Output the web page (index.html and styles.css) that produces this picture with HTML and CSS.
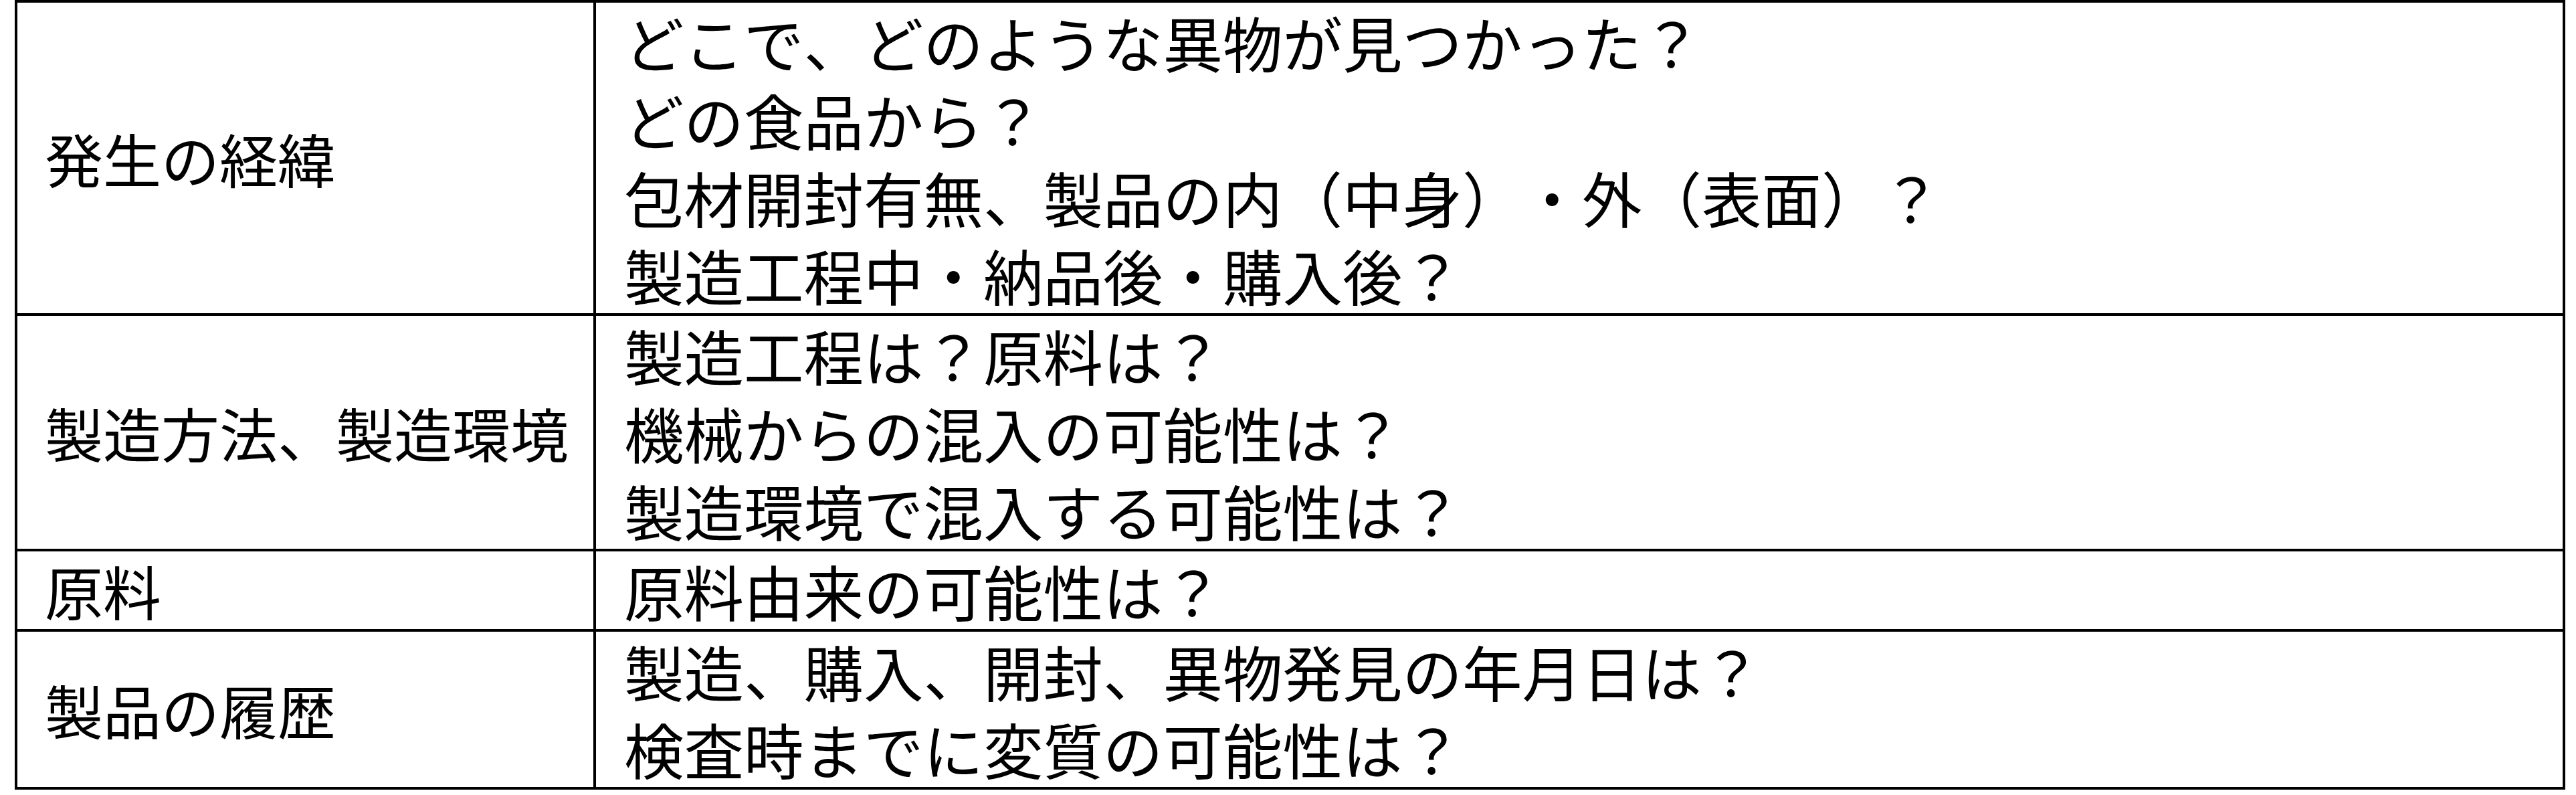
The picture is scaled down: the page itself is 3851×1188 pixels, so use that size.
FILE: index.html
```html
<!DOCTYPE html>
<html lang="ja">
<head>
<meta charset="utf-8">
<title>異物混入の確認事項</title>
<link rel="stylesheet" href="styles.css">
</head>
<body>
<div class="sheet">
  <div class="cell label">発生の経緯</div>
  <div class="cell detail">
    <span class="line">どこで、どのような異物が見つかった？</span>
    <span class="line">どの食品から？</span>
    <span class="line">包材開封有無、製品の内（中身）・外（表面）？</span>
    <span class="line">製造工程中・納品後・購入後？</span>
  </div>

  <div class="cell label">製造方法、製造環境</div>
  <div class="cell detail">
    <span class="line">製造工程は？原料は？</span>
    <span class="line">機械からの混入の可能性は？</span>
    <span class="line">製造環境で混入する可能性は？</span>
  </div>

  <div class="cell label">原料</div>
  <div class="cell detail">
    <span class="line">原料由来の可能性は？</span>
  </div>

  <div class="cell label">製品の履歴</div>
  <div class="cell detail">
    <span class="line">製造、購入、開封、異物発見の年月日は？</span>
    <span class="line">検査時までに変質の可能性は？</span>
  </div>
</div>
</body>
</html>
```

FILE: styles.css
```css
html, body {
  margin: 0;
  padding: 0;
  background: #ffffff;
}

body {
  padding-left: 22px;
  font-family: "Noto Sans CJK JP", "Noto Sans", sans-serif;
  font-weight: 400;
  color: #000000;
}

.sheet {
  display: grid;
  grid-template-columns: 861px 1fr;
  gap: 4px;
  padding: 4px;
  width: 3813px;
  box-sizing: border-box;
  background: #000000;
}

.cell {
  background: #ffffff;
  display: flex;
  flex-direction: column;
  justify-content: center;
  padding: 0 0 0 41px;
  line-height: 116px;
  white-space: nowrap;
  text-spacing-trim: space-all;
  font-kerning: none;
}

.label {
  font-size: 87px;
}

.detail {
  padding-left: 42px;
  font-size: 89.5px;
}

.line {
  display: block;
}
```
